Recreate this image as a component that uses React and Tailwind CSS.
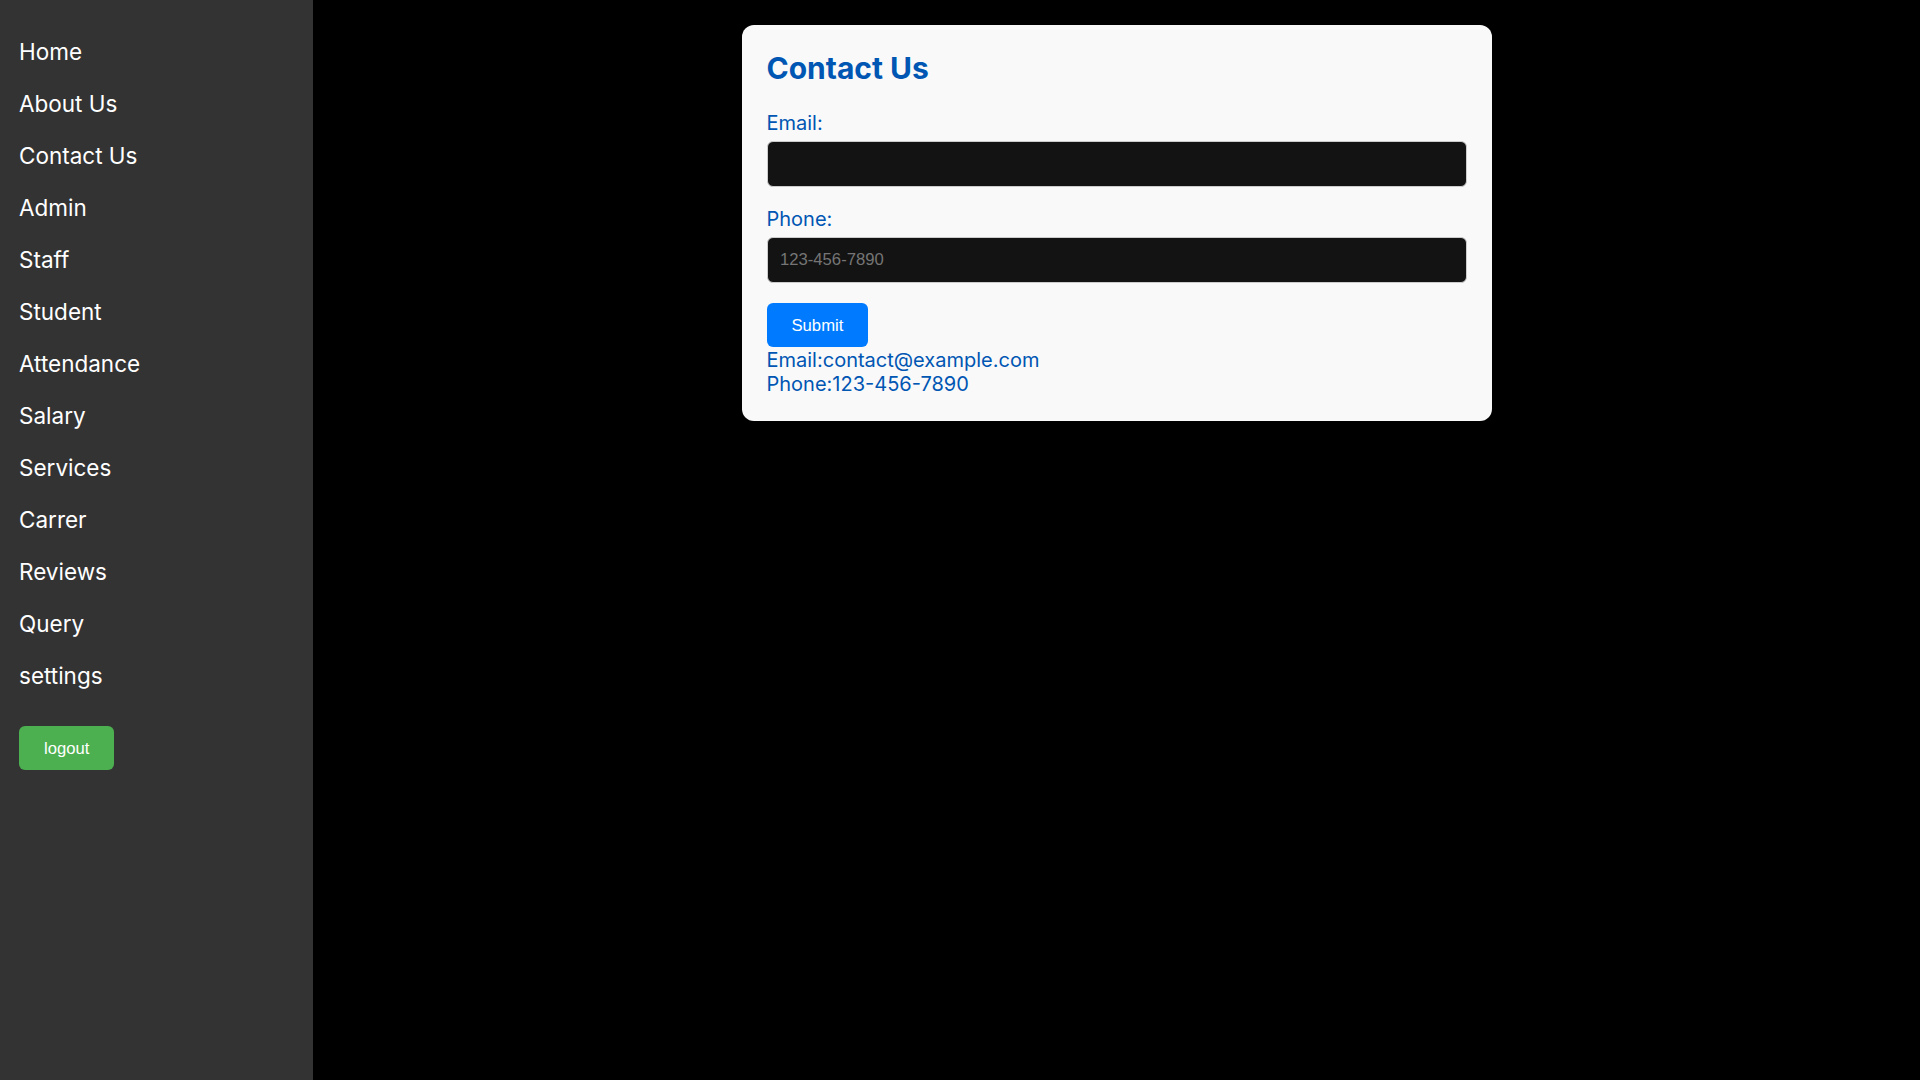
import { useState } from 'react';

/* ============================================================
   SIDEBAR
============================================================ */
const NAV = [
  'Home', 'About Us', 'Contact Us', 'Admin', 'Staff', 'Student', 'Attendance',
  'Salary', 'Services', 'Carrer', 'Reviews', 'Query', 'settings',
];

function Sidebar() {
  return (
    <aside className="w-[313px] shrink-0 bg-[#333333] px-[19px] pt-[25px]">
      <ul>
        {NAV.map(item => (
          <li key={item} className="py-[12.5px] text-[22.5px] leading-[27px] text-white">
            <a href="#">{item}</a>
          </li>
        ))}
      </ul>
      <button
        className="mt-[25px] rounded-[6px] bg-[#4caf50] px-[25px] py-[12.5px] text-[16.67px] leading-[1.15] text-white"
        style={{ fontFamily: '"Liberation Sans", Arial, sans-serif' }}
      >
        logout
      </button>
    </aside>
  );
}

/* ============================================================
   CONTACT CARD
============================================================ */
function ContactCard() {
  const [email, setEmail] = useState('');
  const [phone, setPhone] = useState('');
  const arial = { fontFamily: '"Liberation Sans", Arial, sans-serif' };

  return (
    <div className="w-[750px] rounded-[12px] bg-[#f9f9f9] p-[25px]">
      <h2 className="mb-[25px] text-[30px] font-bold leading-[1.21] text-[#0056b3]">Contact Us</h2>
      <form onSubmit={e => e.preventDefault()}>
        <label className="mb-[6px] block text-[20px] leading-[24px] text-[#0056b3]">Email:</label>
        <input type="email" value={email} onChange={e => setEmail(e.target.value)}
          className="mb-[20px] block h-[46px] w-full rounded-[6px] border border-[#cccccc] bg-[#131313] px-[12.5px] text-[16.67px] text-white outline-none"
          style={arial} />
        <label className="mb-[6px] block text-[20px] leading-[24px] text-[#0056b3]">Phone:</label>
        <input type="tel" value={phone} onChange={e => setPhone(e.target.value)} placeholder="123-456-7890"
          className="mb-[20px] block h-[46px] w-full rounded-[6px] border border-[#cccccc] bg-[#131313] px-[12.5px] text-[16.67px] text-white outline-none placeholder:text-[#757575]"
          style={arial} />
        <button type="submit"
          className="block rounded-[6px] bg-[#007bff] px-[25px] py-[12.5px] text-[16.67px] leading-[1.15] text-white"
          style={arial}>
          Submit
        </button>
      </form>
      <div className="mt-[1px] text-[20px] leading-[24px] text-[#0056b3]">
        <p>Email:contact@example.com</p>
        <p>Phone:123-456-7890</p>
      </div>
    </div>
  );
}

export default function App() {
  return (
    <div className="flex min-h-screen bg-black" style={{ fontFamily: 'Inter, "Noto Sans", sans-serif' }}>
      <Sidebar />
      <main className="flex flex-1 items-start justify-center pt-[25px]">
        <ContactCard />
      </main>
    </div>
  );
}
